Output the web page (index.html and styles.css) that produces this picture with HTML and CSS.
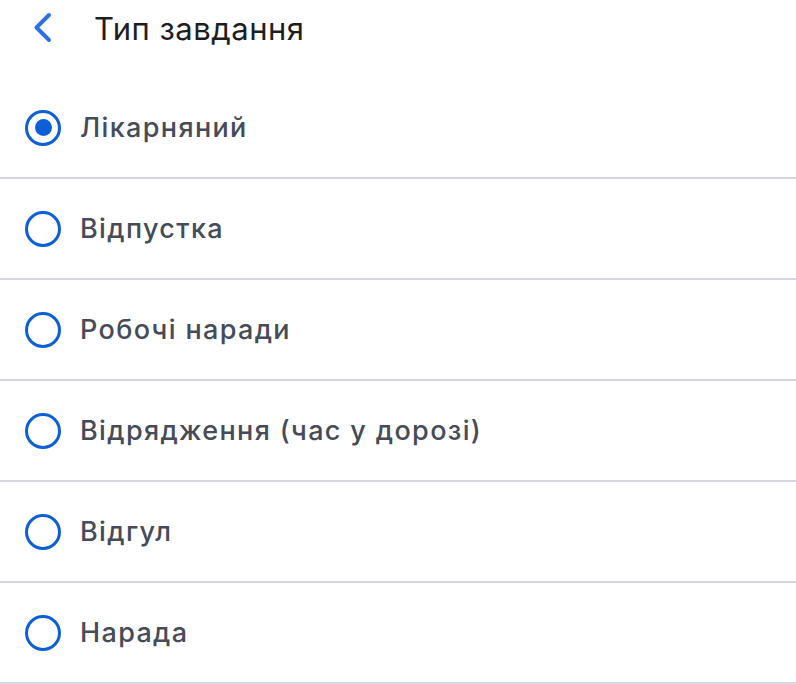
FILE: index.html
```html
<!DOCTYPE html>
<html lang="uk">
<head>
<meta charset="utf-8">
<link rel="stylesheet" href="styles.css">
</head>
<body>
<div class="screen">
  <header class="header">
    <svg class="back" width="22" height="32" viewBox="0 0 22 32"><path d="M17 3 L4.5 15.5 L17 28" fill="none" stroke="#2f6fe6" stroke-width="4" stroke-linecap="round" stroke-linejoin="round"/></svg>
    <h1 class="title">Тип завдання</h1>
  </header>
  <ul class="list">
    <li class="row"><span class="radio checked"></span><span class="label">Лікарняний</span></li>
    <li class="row"><span class="radio"></span><span class="label">Відпустка</span></li>
    <li class="row"><span class="radio"></span><span class="label">Робочі наради</span></li>
    <li class="row"><span class="radio"></span><span class="label">Відрядження (час у дорозі)</span></li>
    <li class="row"><span class="radio"></span><span class="label">Відгул</span></li>
    <li class="row"><span class="radio"></span><span class="label">Нарада</span></li>
  </ul>
</div>
</body>
</html>
```
FILE: styles.css
```css
* { box-sizing: border-box; }
html, body { margin: 0; padding: 0; background: #fff; }
body { font-family: Inter, "Noto Sans", sans-serif; }
.screen { width: 796px; }
.header {
  height: 78px;
  display: flex;
  align-items: center;
  padding-left: 32px;
  padding-bottom: 22px;
}
.back { display: block; }
.title {
  margin: 0 0 0 40px;
  font-size: 31px;
  font-weight: 400;
  color: #1d1d22;
  letter-spacing: 0.5px;
}
.list { list-style: none; margin: 0; padding: 0; }
.row {
  height: 101px;
  border-bottom: 2px solid #d6d6e2;
  display: flex;
  align-items: center;
  padding-left: 25px;
}
.radio {
  width: 36px;
  height: 36px;
  border-radius: 50%;
  border: 3.5px solid #0d5fd8;
  flex: none;
  display: flex;
  align-items: center;
  justify-content: center;
}
.radio.checked::after {
  content: "";
  width: 17px;
  height: 17px;
  border-radius: 50%;
  background: #0d5fd8;
}
.label {
  margin-left: 19px;
  font-size: 27px;
  font-weight: 500;
  color: #454b58;
  letter-spacing: 1.35px;
}
```
